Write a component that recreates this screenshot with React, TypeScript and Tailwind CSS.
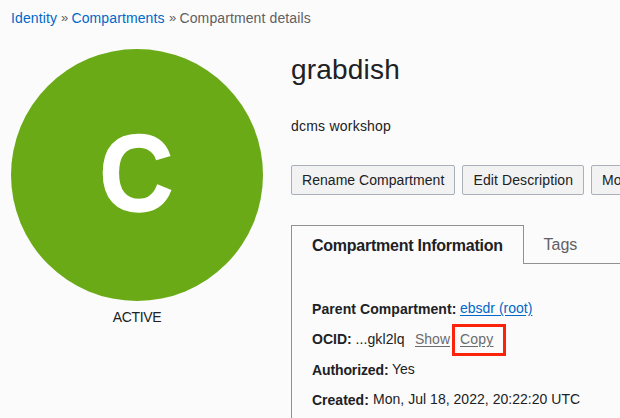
import type { ReactNode } from "react";

function ActionButton({ className, children }: { className: string; children: ReactNode }) {
  return (
    <button
      type="button"
      className={`h-[30px] shrink-0 rounded-[2px] border border-[#a9b0b9] bg-[#f2f2f2] text-left leading-[28px] whitespace-nowrap ${className}`}
    >
      {children}
    </button>
  );
}

function Field({ label, labelClass, valueClass = "", children }: { label: string; labelClass: string; valueClass?: string; children: ReactNode }) {
  return (
    <div className="flex h-[30.3px] items-start whitespace-nowrap">
      <dt className={`shrink-0 pt-px font-bold leading-[16px] ${labelClass}`}>{label}</dt>
      <dd className={`flex leading-[16px] ${valueClass}`}>{children}</dd>
    </div>
  );
}

export default function App() {
  return (
    <div className="h-[418px] w-[620px] overflow-hidden bg-[#fbfbfb] font-['Liberation_Sans',Arial,sans-serif] text-[14px] text-[#202124]">
      <nav className="flex h-[49px] pt-[10px] pl-[11px] leading-[16px] whitespace-nowrap text-[#5f6062]">
        <a className="w-[50px] tracking-[0.12px] text-[#0068c8]">Identity</a>
        <span className="w-[10.5px] text-[13px]">»</span>
        <a className="w-[97.5px] tracking-[0.1px] text-[#0068c8]">Compartments</a>
        <span className="w-[10.5px] text-[13px]">»</span>
        <span className="tracking-[0.11px]">Compartment details</span>
      </nav>
      <main className="flex">
        <aside className="ml-[11px] w-[252px] shrink-0">
          <div className="flex h-[252px] items-center justify-center rounded-full bg-[#6aaa17] text-[109px] leading-none font-bold text-white">
            <span className="-mt-[3px] mr-[2px] scale-x-[0.94] [-webkit-text-stroke:1.5px_white]">C</span>
          </div>
          <p className="mt-[8px] text-center leading-[16px] tracking-[-0.35px]">ACTIVE</p>
        </aside>
        <section className="ml-[28px] w-[329px] shrink-0">
          <h1 className="h-[68px] pt-[5px] text-[28px] leading-[32px] tracking-[0.2px]">grabdish</h1>
          <p className="h-[48px] leading-[18px] tracking-[0.22px]">dcms workshop</p>
          <div className="flex gap-[7px]">
            <ActionButton className="w-[164px] pl-[10px] tracking-[0.04px]">Rename Compartment</ActionButton>
            <ActionButton className="w-[122px] pl-[10.5px] tracking-[0.1px]">Edit Description</ActionButton>
            <ActionButton className="w-[150px] pl-[10px]">Mo</ActionButton>
          </div>
          <div className="mt-[30px] flex h-[39px] text-[16px]">
            <div className="w-[233px] shrink-0 border-t border-r border-l border-[#919191] pl-[20px] leading-[39px] font-bold tracking-[-0.25px] whitespace-nowrap">
              Compartment Information
            </div>
            <div className="grow border-b border-[#919191] pl-[19.5px] leading-[39px] text-[#5f6062]">Tags</div>
          </div>
          <dl className="h-[160px] border-l border-[#919191] pt-[36px] pl-[20px]">
            <Field label="Parent Compartment:" labelClass="w-[148px] tracking-[0.07px]">
              <a className="text-[#0068c8] underline underline-offset-2">ebsdr (root)</a>
            </Field>
            <Field label="OCID:" labelClass="w-[43.5px]" valueClass="pt-px">
              <span className="w-[59.5px] tracking-[0.1px]">...gkl2lq</span>
              <a className="w-[45px] text-[#6b6b6b] underline underline-offset-2">Show</a>
              <span className="relative text-[#6b6b6b]">
                <a className="tracking-[0.2px] underline underline-offset-2">Copy</a>
                <span className="absolute -top-[7px] -left-[8px] h-[32px] w-[54px] border-[3px] border-[#fb230c]" />
              </span>
            </Field>
            <Field label="Authorized:" labelClass="w-[80px] tracking-[-0.12px]">Yes</Field>
            <Field label="Created:" labelClass="w-[61px]"><span className="tracking-[0.03px]">Mon, Jul 18, 2022, 20:22:20 UTC</span></Field>
          </dl>
        </section>
      </main>
    </div>
  );
}
